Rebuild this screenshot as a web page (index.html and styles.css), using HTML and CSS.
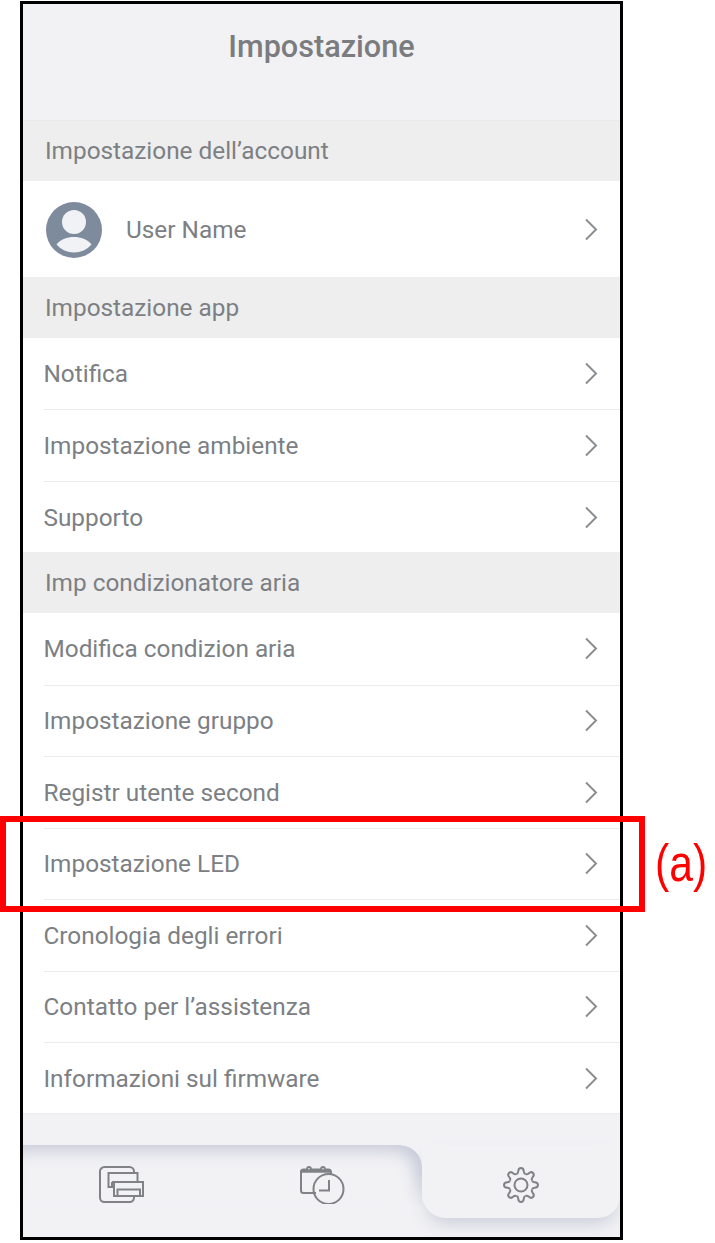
FILE: index.html
```html
<!DOCTYPE html>
<html lang="it">
<head>
<meta charset="utf-8">
<title>Impostazione</title>
<link rel="stylesheet" href="styles.css">
</head>
<body>
<svg class="defs" width="0" height="0" aria-hidden="true">
  <defs>
    <path id="chev" d="M2 1.5 12 11.5 2 21.5"/>
    <path id="tooth" d="M-4.59-11.09Q-2.9-11.5-2.8-13.5Q-2.6-17 0-17Q2.6-17 2.8-13.5Q2.9-11.5 4.59-11.09"/>
  </defs>
</svg>
<main class="phone">
  <header class="title-bar"><h1 class="title">Impostazione</h1></header>

  <h2 class="section">Impostazione dell’account</h2>
  <div class="user-row">
    <svg class="avatar" viewBox="0 0 56 56" width="56" height="56">
      <circle cx="28" cy="28" r="28" fill="#7e8b9d"/>
      <circle cx="28" cy="20" r="12" fill="#f0f2f5"/>
      <path d="M10.5 42.5C15 37 21 35 28 35S41 37 45.5 42.5A23 23 0 0 1 10.5 42.5Z" fill="#f0f2f5"/>
    </svg>
    <span class="user-name">User Name</span>
    <svg class="chevron" viewBox="0 0 14 23" width="14" height="23"><use href="#chev"/></svg>
  </div>

  <h2 class="section">Impostazione app</h2>
  <ul class="list">
    <li class="row"><span>Notifica</span><svg class="chevron" viewBox="0 0 14 23" width="14" height="23"><use href="#chev"/></svg></li>
    <li class="row"><span>Impostazione ambiente</span><svg class="chevron" viewBox="0 0 14 23" width="14" height="23"><use href="#chev"/></svg></li>
    <li class="row"><span>Supporto</span><svg class="chevron" viewBox="0 0 14 23" width="14" height="23"><use href="#chev"/></svg></li>
  </ul>

  <h2 class="section">Imp condizionatore aria</h2>
  <ul class="list">
    <li class="row"><span>Modifica condizion aria</span><svg class="chevron" viewBox="0 0 14 23" width="14" height="23"><use href="#chev"/></svg></li>
    <li class="row"><span>Impostazione gruppo</span><svg class="chevron" viewBox="0 0 14 23" width="14" height="23"><use href="#chev"/></svg></li>
    <li class="row"><span>Registr utente second</span><svg class="chevron" viewBox="0 0 14 23" width="14" height="23"><use href="#chev"/></svg></li>
    <li class="row"><span>Impostazione LED</span><svg class="chevron" viewBox="0 0 14 23" width="14" height="23"><use href="#chev"/></svg></li>
    <li class="row"><span>Cronologia degli errori</span><svg class="chevron" viewBox="0 0 14 23" width="14" height="23"><use href="#chev"/></svg></li>
    <li class="row"><span>Contatto per l’assistenza</span><svg class="chevron" viewBox="0 0 14 23" width="14" height="23"><use href="#chev"/></svg></li>
    <li class="row"><span>Informazioni sul firmware</span><svg class="chevron" viewBox="0 0 14 23" width="14" height="23"><use href="#chev"/></svg></li>
  </ul>

  <nav class="tabbar">
    <div class="tabs-left">
      <div class="tab tab-ac">
        <svg class="tab-icon" viewBox="0 0 46 38" width="46" height="38">
          <path d="M35 6V5.500A4.500 4.500 0 0 0 30.500 1H5.500A4.500 4.500 0 0 0 1 5.500V31.500A4.500 4.500 0 0 0 5.500 36H30.500A4.500 4.500 0 0 0 35 31.500V30"/>
          <path d="M13 21H9.500V7H38.500V16"/>
          <path d="M13 16H38.500"/>
          <path d="M13 16V21H15"/>
          <rect x="15" y="16" width="29" height="14"/>
          <path d="M18.500 30V23.500H41V30"/>
        </svg>
      </div>
      <div class="tab tab-clock">
        <svg class="tab-icon" viewBox="0 0 46 38" width="46" height="38">
          <path d="M16 27H3.500A2.500 2.500 0 0 1 1 24.500V5A2.500 2.500 0 0 1 3.500 3.500H29A2.500 2.500 0 0 1 31 5.500V8"/>
          <path class="thick" d="M1.500 5H31"/>
          <circle class="ring" cx="9" cy="2.800" r="1.800"/>
          <circle class="ring" cx="23" cy="2.800" r="1.800"/>
          <circle cx="28.500" cy="23" r="15"/>
          <path d="M29 14V24.500H19"/>
        </svg>
      </div>
    </div>
    <div class="tab-active">
      <svg class="tab-icon" viewBox="-19 -19 38 38" width="38" height="38">
        <use href="#tooth"/>
        <use href="#tooth" transform="rotate(45)"/>
        <use href="#tooth" transform="rotate(90)"/>
        <use href="#tooth" transform="rotate(135)"/>
        <use href="#tooth" transform="rotate(180)"/>
        <use href="#tooth" transform="rotate(225)"/>
        <use href="#tooth" transform="rotate(270)"/>
        <use href="#tooth" transform="rotate(315)"/>
        <circle r="6.500"/>
      </svg>
    </div>
  </nav>
</main>
<div class="callout"></div>
<span class="callout-label">(a)</span>
</body>
</html>
```
FILE: styles.css
```css
* { box-sizing: border-box; }
html, body { margin: 0; padding: 0; background: #fff; }
body { width: 715px; height: 1243px; position: relative; overflow: hidden; font-family: Roboto, "Liberation Sans", sans-serif; }
.defs { position: absolute; }

.phone {
  margin: 1px 0 0 20px;
  width: 603px;
  height: 1239px;
  border: 3px solid #000;
  background: #f2f2f5;
  display: flex;
  flex-direction: column;
  overflow: hidden;
}

.title-bar { height: 116.5px; flex: none; border-bottom: 1px solid #e9e9ea; display: flex; justify-content: center; padding-top: 24px; }
.title { margin: 0; font-size: 30.6px; line-height: 38px; font-weight: 500; color: #7a7c80; }

.section {
  margin: 0;
  flex: none;
  height: 60.7px;
  background: #eeeeee;
  padding-left: 22px;
  display: flex;
  align-items: center;
  font-size: 24.35px;
  font-weight: 400;
  color: #7c8084;
}

.user-row { flex: none; height: 96px; background: #fff; display: flex; align-items: center; padding-left: 23px; padding-right: 22px; }
.avatar { flex: none; margin-top: 1px; }
.user-name { margin-left: 24px; font-size: 24.35px; color: #7c8084; flex: 1; }

.list { list-style: none; margin: 0; padding: 0 0 0 20.5px; background: #fff; flex: none; }
.row {
  height: 71.5px;
  display: flex;
  align-items: center;
  justify-content: space-between;
  padding-right: 22px;
  border-top: 1.5px solid #ececec;
  font-size: 24.35px;
  color: #7c8084;
}
.row:first-child { border-top: 0; }

.chevron { flex: none; fill: none; stroke: #8b8e91; stroke-width: 2; }

.tabbar { flex: 1; display: flex; margin-top: -1px; padding-top: 31px; min-height: 0; border-top: 1px solid #ebebeb; }
.tabs-left {
  width: 399px;
  flex: none;
  display: flex;
  position: relative;
  padding-top: 21px;
}
.tabs-left::before {
  content: "";
  position: absolute;
  left: 0;
  right: 0;
  top: 0;
  height: 62px;
  border-top-right-radius: 22px;
  box-shadow: inset -8px 8px 16px -2px #c8ccd9;
  -webkit-mask-image: linear-gradient(to bottom, #000 45%, transparent 100%);
  mask-image: linear-gradient(to bottom, #000 45%, transparent 100%);
}
.tab { display: flex; align-items: flex-start; position: relative; }
.tab-ac { margin-left: 76px; }
.tab-clock { margin-left: 155px; }
.tab-icon { fill: none; stroke: #808285; stroke-width: 2; display: block; }
.tab-icon .thick { stroke-width: 3.5; }
.tab-icon .ring { fill: #f2f2f5; }

.tab-active {
  flex: none;
  width: 198px;
  height: 73px;
  background: #f2f2f5;
  border-radius: 0 0 22px 24px;
  box-shadow: 0 10px 18px -5px #c8ccd9;
  display: flex;
  justify-content: center;
  padding-top: 21px;
  position: relative;
}

.callout {
  position: absolute;
  left: 0;
  top: 816px;
  width: 645px;
  height: 96px;
  border: 6px solid #ff0000;
}
.callout-label {
  position: absolute;
  left: 655px;
  top: 833px;
  font-family: "Liberation Sans", Arial, sans-serif;
  font-size: 52px;
  line-height: 60px;
  color: #f00;
  transform: scaleX(0.82);
  transform-origin: left center;
}
```
